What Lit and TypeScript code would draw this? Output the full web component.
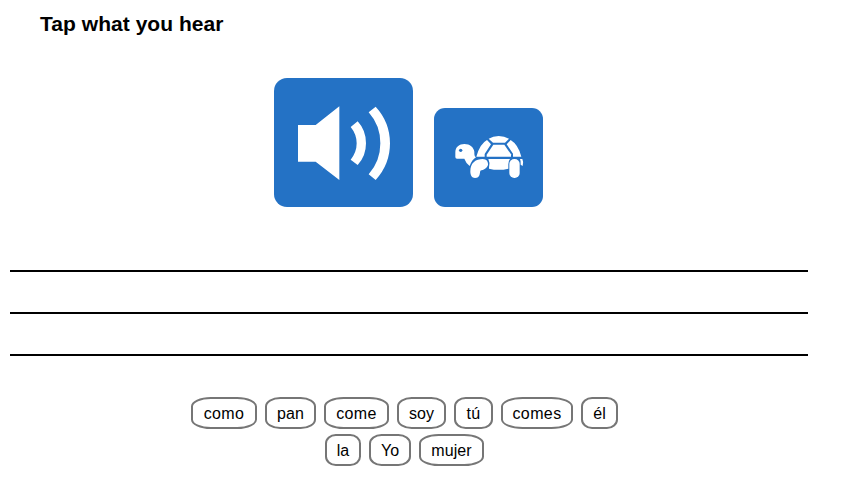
import { LitElement, html, css } from "lit";
import { customElement, property } from "lit/decorators.js";

interface Word {
  text: string;
  width: number;
  spacing: number;
}

const rows: Word[][] = [
  [
    { text: "como", width: 66, spacing: 0.4 },
    { text: "pan", width: 51, spacing: 0.1 },
    { text: "come", width: 65, spacing: 0.4 },
    { text: "soy", width: 49, spacing: 0.1 },
    { text: "tú", width: 39, spacing: 0.3 },
    { text: "comes", width: 72, spacing: 0.4 },
    { text: "él", width: 37, spacing: 0.1 },
  ],
  [
    { text: "la", width: 36, spacing: 0 },
    { text: "Yo", width: 42, spacing: 0 },
    { text: "mujer", width: 65, spacing: 0.1 },
  ],
];

@customElement("word-chip")
export class WordChip extends LitElement {
  @property({ type: Number }) width = 50;
  @property({ type: Number }) spacing = 0;

  static styles = css`
    .chip {
      box-sizing: border-box;
      height: 32px;
      padding: 2px 0 0;
      border: 2px solid #767676;
      border-radius: 30%;
      background: #fff;
      color: #000;
      font: 16px/26px "Liberation Sans", Arial, sans-serif;
      white-space: nowrap;
      display: block;
    }
  `;

  render() {
    return html`<button
      class="chip"
      style="width:${this.width}px;letter-spacing:${this.spacing}px"
    ><slot></slot></button>`;
  }
}

@customElement("app-root")
export class AppRoot extends LitElement {
  static styles = css`
    :host {
      display: block;
      box-sizing: border-box;
      height: 487px;
      overflow: hidden;
      background: #fff;
      color: #000;
      font-family: "Liberation Sans", Arial, sans-serif;
    }
    .title {
      margin: 0;
      padding: 12px 0 0 40px;
      height: 66px;
      box-sizing: border-box;
      margin-bottom: 12px;
      font-size: 21px;
      line-height: 24px;
      font-weight: 700;
      letter-spacing: 0.04px;
    }
    .players {
      display: flex;
      align-items: flex-end;
      gap: 21px;
      padding-left: 274px;
      height: 129px;
    }
    .player {
      display: block;
      padding: 0;
      border: 0;
      background: #2472c5;
      border-radius: 13px;
      overflow: hidden;
    }
    .slow {
      border-radius: 11px;
    }
    .icon {
      display: block;
    }
    .lines {
      display: grid;
      gap: 40px;
      width: 798px;
      margin: 63px 0 0 10px;
    }
    .line {
      height: 2px;
      background: #000;
    }
    .bank {
      display: grid;
      gap: 5px;
      width: 809px;
      margin-top: 41px;
    }
    .row {
      display: flex;
      justify-content: center;
      gap: 8px;
    }
  `;

  render() {
    return html`
      <h1 class="title">Tap what you hear</h1>
      <div class="players">
        <button class="player" aria-label="Play">
          <svg class="icon" width="139" height="129" viewBox="0 0 417 387">
            <path fill="#fff" d="M72 141H125L196 85V306L125 251H72Z" />
            <path fill="#fff" d="M230 147L251 130Q276 157 276 196T251 261L230 245Q248 223 248 196T230 147Z" />
            <path fill="#fff" d="M284 103L305 86Q348 133 348 196T305 306L284 289Q319 250 319 196T284 103Z" />
          </svg>
        </button>
        <button class="player slow" aria-label="Play slowly">
          <svg class="icon" width="109" height="99" viewBox="0 0 327 297">
            <g fill="#fff">
              <path d="M64 133C64 117 76 108 91 108C108 108 119 118 121 131C121 140 121 144 126 148Q114 155 107 174Q95 164 91 152H69Q64 152 64 147Z" />
              <path d="M164 92Q177 84 194 84Q211 84 225 92L213 104H177Z" />
              <path d="M127 146Q138 107 159 96L171 109L152 138V146Z" />
              <path d="M158 146V140L178 110H211L231 139V146Z" />
              <path d="M230 96Q253 110 262 146H237V137L218 109Z" />
              <path d="M163 153H228Q223 159 223 169V182Q194 189 165 182V178Q169 165 163 153Z" />
              <path d="M109 190C109 164 126 153 146 153C158 153 163 162 162 170C160 181 148 185 139 188C137 194 139 210 123 210C114 210 109 203 109 190Z" />
              <rect x="226" y="153" width="31" height="57" rx="15" />
              <path d="M258 153H265Q270 163 266 174L260 170Q261 159 258 153Z" />
            </g>
            <circle cx="80" cy="127" r="5" fill="#2472c5" />
          </svg>
        </button>
      </div>
      <div class="lines">
        <div class="line"></div>
        <div class="line"></div>
        <div class="line"></div>
      </div>
      <div class="bank">
        ${rows.map(
          (row) => html`<div class="row">
            ${row.map(
              (w) => html`<word-chip .width=${w.width} .spacing=${w.spacing}>${w.text}</word-chip>`
            )}
          </div>`
        )}
      </div>
    `;
  }
}
